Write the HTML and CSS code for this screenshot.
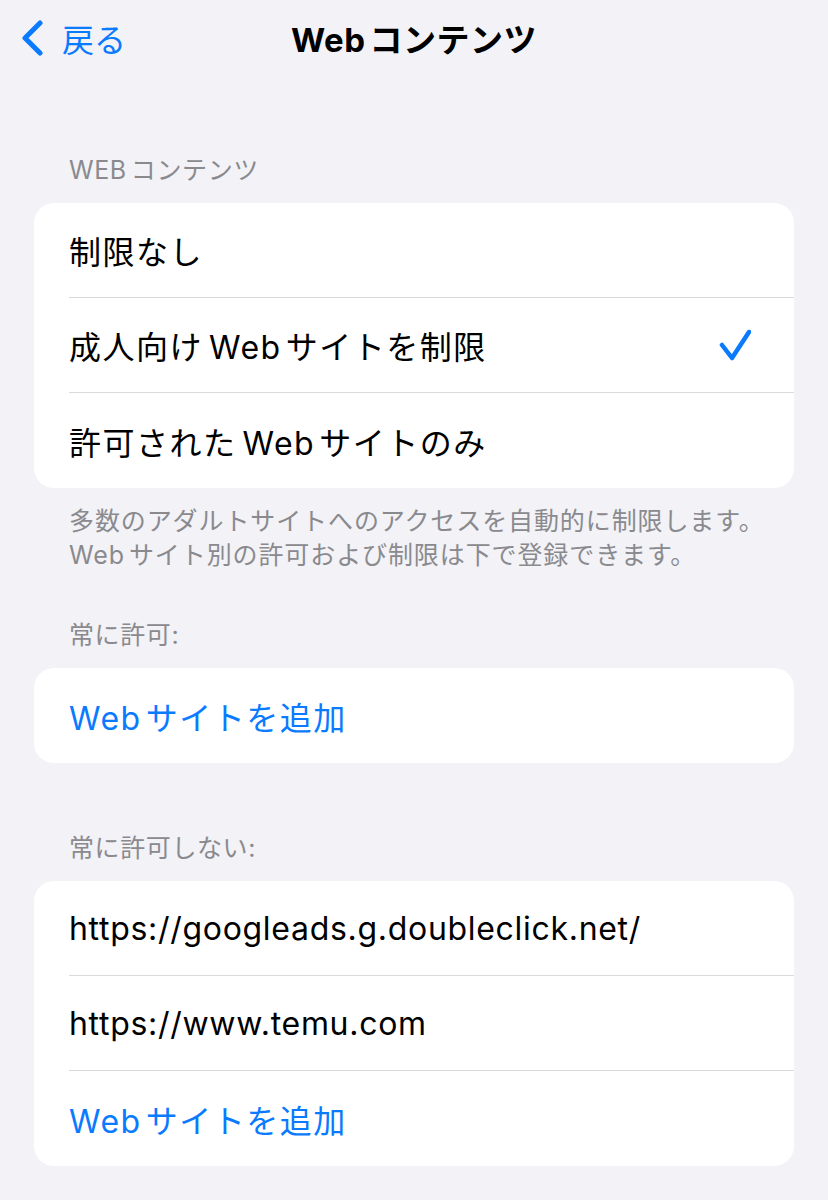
FILE: index.html
```html
<!DOCTYPE html>
<html lang="ja">
<head>
    <meta charset="UTF-8">
    <meta name="viewport" content="width=device-width, initial-scale=1.0">
    <title>Webコンテンツ</title>
    <link rel="stylesheet" href="styles.css">
</head>
<body>
    <header class="navbar">
        <a class="back" href="#">
            <svg class="chevron" width="24" height="36" viewBox="0 0 24 36">
                <path d="M20 3 L5 18 L20 33" fill="none" stroke="currentColor" stroke-width="5" stroke-linecap="round" stroke-linejoin="round"/>
            </svg>
            <span>戻る</span>
        </a>
        <h1 class="title"><span class="lat">Web</span>コンテンツ</h1>
        <div></div>
    </header>

    <main class="content">
        <section class="group">
            <h2 class="group-header"><span class="lat">WEB</span>コンテンツ</h2>
            <ul class="card">
                <li class="row"><span>制限なし</span></li>
                <li class="row">
                    <span>成人向け<span class="lat both">Web</span>サイトを制限</span>
                    <svg class="check" width="32" height="32" viewBox="0 0 32 32">
                        <path d="M3 16 L13 29 L30 3" fill="none" stroke="currentColor" stroke-width="4.5" stroke-linecap="round" stroke-linejoin="round"/>
                    </svg>
                </li>
                <li class="row"><span>許可された<span class="lat both">Web</span>サイトのみ</span></li>
            </ul>
            <p class="group-footer">多数のアダルトサイトへのアクセスを自動的に制限します。<br><span class="lat">Web</span>サイト別の許可および制限は下で登録できます。</p>
        </section>

        <section class="group">
            <h2 class="group-header">常に許可:</h2>
            <ul class="card">
                <li class="row link"><span><span class="lat">Web</span>サイトを追加</span></li>
            </ul>
        </section>

        <section class="group">
            <h2 class="group-header">常に許可しない:</h2>
            <ul class="card">
                <li class="row url"><span>https://googleads.g.doubleclick.net/</span></li>
                <li class="row url"><span>https://www.temu.com</span></li>
                <li class="row link"><span><span class="lat">Web</span>サイトを追加</span></li>
            </ul>
        </section>
    </main>
</body>
</html>
```

FILE: styles.css
```css
body {
    margin: 0;
    background: #f2f2f7;
    font-family: Inter, "Noto Sans CJK JP", sans-serif;
    color: #000;
}

/* latin word inside japanese text gets a little air around it */
.lat {
    margin-right: 4px;
}
.lat.both {
    margin-left: 6px;
}

.navbar {
    display: grid;
    grid-template-columns: 1fr auto 1fr;
    align-items: center;
    height: 76px;
}
.back {
    display: flex;
    align-items: center;
    gap: 18px;
    padding-left: 20px;
    color: #0a7aff;
    text-decoration: none;
    font-size: 32px;
}
.chevron {
    display: block;
}
.title {
    margin: 0;
    font-size: 33px;
    font-weight: 700;
    letter-spacing: 0.5px;
}

.content {
    padding: 0 34px 40px;
}
.group {
    margin-top: 79px;
}
.group-header {
    margin: 0 0 18px 35px;
    font-size: 25px;
    line-height: 30px;
    font-weight: 400;
    color: #8a8a8e;
    letter-spacing: 0.6px;
}
.card {
    list-style: none;
    margin: 0;
    padding: 0;
    background: #fff;
    border-radius: 20px;
    overflow: hidden;
}
.row {
    display: flex;
    align-items: center;
    justify-content: space-between;
    height: 95px;
    box-sizing: border-box;
    margin-left: 35px;
    padding-right: 43px;
    font-size: 32px;
    letter-spacing: 1.5px;
    border-bottom: 1px solid #d9d9de;
}
.row:last-child {
    border-bottom: none;
}
.url {
    letter-spacing: 0.7px;
}
.link {
    color: #0a7aff;
}
.check {
    color: #0a7aff;
}
.group-footer {
    margin: 16px 0 0 35px;
    font-size: 25px;
    line-height: 34px;
    color: #8a8a8e;
    letter-spacing: 0.9px;
}
.group:nth-child(2) {
    margin-top: 48px;
}
.group:nth-child(3) {
    margin-top: 70px;
}
```
